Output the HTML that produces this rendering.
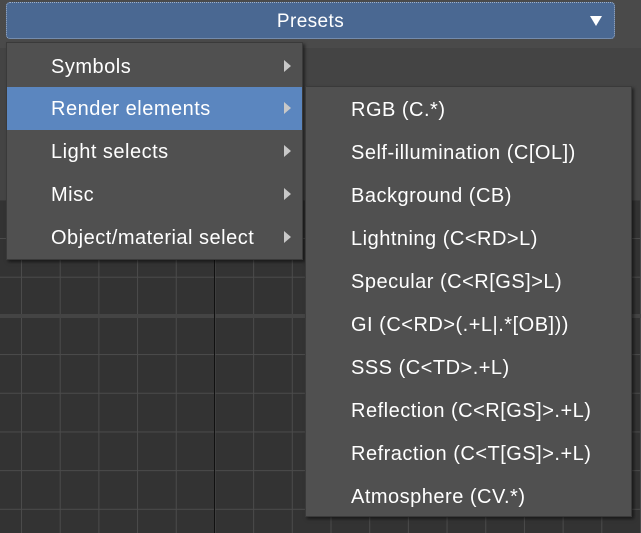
<!DOCTYPE html>
<html><head><style>
body{margin:0;width:641px;height:533px;overflow:hidden;background:#474747;font-family:"Liberation Sans",sans-serif;position:relative}
.top{position:absolute;left:0;top:0;width:641px;height:48px;background:#4a4a4a}
.band{position:absolute;left:0;top:48px;width:641px;height:152px;background:#444}
.grid{position:absolute;left:0;top:200px;width:641px;height:333px;background-color:#333;
background-image:linear-gradient(to right,#4b4b4b 1px,transparent 1px),linear-gradient(to bottom,#4b4b4b 1px,transparent 1px);
background-size:38.7px 38.7px;background-position:21px 38px}
.sep{position:absolute;left:0;top:314px;width:641px;height:4px;background:#444}
.vline{position:absolute;left:214px;top:200px;width:1px;height:333px;background:#111}
.btn{position:absolute;left:6px;top:2px;width:607px;height:35px;background:#4a6892;border:1px dotted #9fb0c8;border-radius:4px;color:#fff;font-size:19px;letter-spacing:0.4px;text-align:center;line-height:37px}
.tri{position:absolute;right:12px;top:13px;width:0;height:0;border-left:6px solid transparent;border-right:6px solid transparent;border-top:10px solid #fff}
.menu{position:absolute;background:#505050;border:1px solid #3a3a3a;box-shadow:2px 2px 3px rgba(0,0,0,.5)}
.item{position:absolute;left:0;right:0;height:43px;line-height:45px;color:#fff;font-size:20px;letter-spacing:0.5px}
.hl{background:#5b86bf;line-height:43px;height:43px}
.arr{position:absolute;right:11px;top:15px;width:0;height:0;border-top:6px solid transparent;border-bottom:6px solid transparent;border-left:7px solid #c8c8c8}
</style></head><body>
<div class="top"></div><div class="band"></div>
<div class="grid"></div><div class="sep"></div><div class="vline"></div>
<div class="btn">Presets<div class="tri"></div></div>
<div class="menu" style="left:6px;top:42px;width:295px;height:216px">
<div class="item" style="top:2px;padding-left:44px">Symbols<div class="arr"></div></div>
<div class="item hl" style="top:44px;padding-left:44px;line-height:45px">Render elements<div class="arr"></div></div>
<div class="item" style="top:87px;padding-left:44px">Light selects<div class="arr"></div></div>
<div class="item" style="top:130px;padding-left:44px">Misc<div class="arr"></div></div>
<div class="item" style="top:173px;padding-left:44px">Object/material select<div class="arr"></div></div>
</div>
<div class="menu" style="left:305px;top:86px;width:325px;height:429px">
<div class="item" style="top:1px;padding-left:45px">RGB (C.*)</div>
<div class="item" style="top:44px;padding-left:45px">Self-illumination (C[OL])</div>
<div class="item" style="top:87px;padding-left:45px">Background (CB)</div>
<div class="item" style="top:130px;padding-left:45px">Lightning (C&lt;RD&gt;L)</div>
<div class="item" style="top:173px;padding-left:45px">Specular (C&lt;R[GS]&gt;L)</div>
<div class="item" style="top:216px;padding-left:45px">GI (C&lt;RD&gt;(.+L|.*[OB]))</div>
<div class="item" style="top:259px;padding-left:45px">SSS (C&lt;TD&gt;.+L)</div>
<div class="item" style="top:302px;padding-left:45px">Reflection (C&lt;R[GS]&gt;.+L)</div>
<div class="item" style="top:345px;padding-left:45px">Refraction (C&lt;T[GS]&gt;.+L)</div>
<div class="item" style="top:388px;padding-left:45px">Atmosphere (CV.*)</div>
</div>
</body></html>
